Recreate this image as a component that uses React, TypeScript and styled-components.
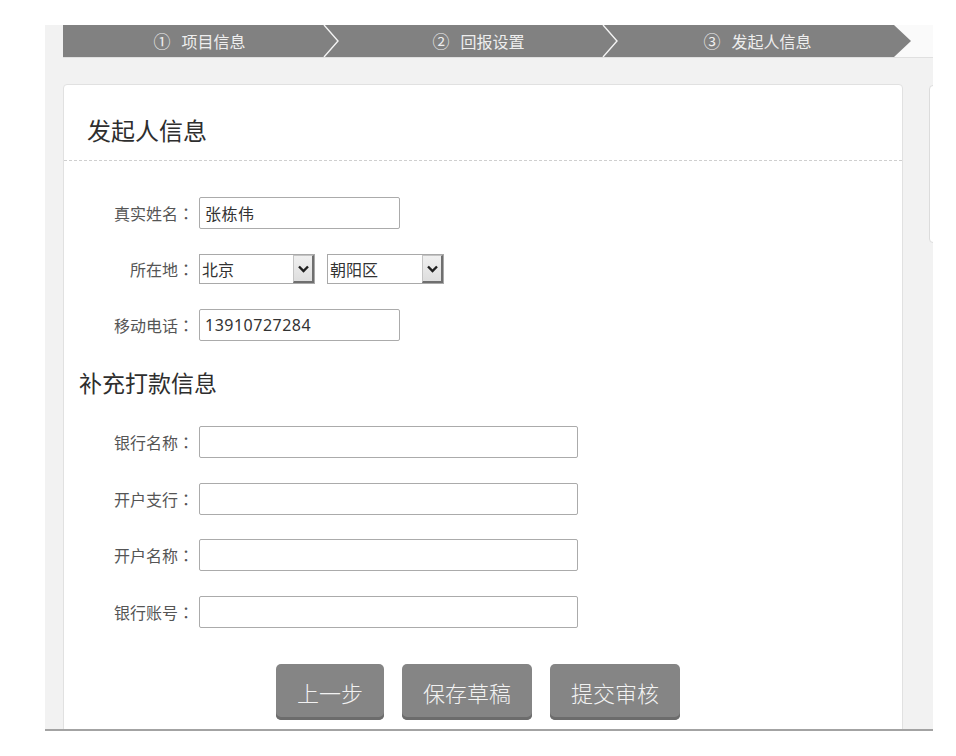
import React from "react";
import styled, { createGlobalStyle } from "styled-components";

const GlobalStyle = createGlobalStyle`
  html, body {
    margin: 0;
    padding: 0;
    background: #ffffff;
    overflow: hidden;
  }
  body {
    font-family: "Noto Sans CJK SC", "Noto Sans", sans-serif;
    color: #333;
  }
  * { box-sizing: border-box; }
`;

const Page = styled.div`
  padding: 25px 0 0 45px;
  width: 956px;
  height: 756px;
`;

const Frame = styled.div`
  width: 888px;
  height: 706px;
  background: #f2f2f2;
  border-bottom: 2px solid #a3a3a3;
  overflow: hidden;
  display: flex;
  flex-direction: column;
`;

const StepBar = styled.div`
  display: flex;
  height: 33px;
  margin-left: 18px;
  padding-right: 22px;
  background: #fafafa;
  border-bottom: 1px solid #e0e0e0;
`;

const Step = styled.div<{ $last?: boolean }>`
  position: relative;
  flex: 1;
  display: flex;
  align-items: center;
  justify-content: center;
  gap: 11px;
  background: #818181;
  color: #eeeeee;
  font-size: 16px;
  line-height: 32px;
  padding-right: ${(p) => (p.$last ? "17px" : "6px")};
  clip-path: ${(p) =>
    p.$last
      ? "polygon(0 0, calc(100% - 17px) 0, 100% 50%, calc(100% - 17px) 100%, 0 100%)"
      : "none"};
`;

const StepNum = styled.span`
  font-size: 17px;
`;

const ChevronMark = styled.svg`
  position: absolute;
  right: 2px;
  top: 0;
  width: 17px;
  height: 32px;
`;

const Content = styled.div`
  display: flex;
  gap: 26px;
  padding-left: 18px;
  margin-top: 26px;
  flex: none;
`;

const Card = styled.div`
  flex: none;
  width: 840px;
  min-height: 700px;
  background: #ffffff;
  border: 1px solid #e1e1e1;
  border-radius: 4px;
`;

const CardHeader = styled.div`
  padding: 31px 24px 16px 23px;
  border-bottom: 1px dashed #cfcfcf;
`;

const CardTitle = styled.h2`
  margin: 0;
  font-size: 24px;
  line-height: 28px;
  font-weight: 400;
  color: #2e2e2e;
`;

const Form = styled.div`
  padding-top: 36px;
  display: flex;
  flex-direction: column;
`;

const Fields = styled.div<{ $gap: number; $top?: number }>`
  display: flex;
  flex-direction: column;
  gap: ${(p) => p.$gap}px;
  margin-top: ${(p) => p.$top ?? 0}px;
`;

const Row = styled.div`
  display: flex;
  align-items: center;
  height: 32px;
`;

const Label = styled.label`
  width: 130px;
  margin-right: 5px;
  text-align: right;
  font-size: 16px;
  color: #555;
  white-space: nowrap;
`;

const Colon = styled.span`
  font-family: "Noto Sans CJK JP", "Noto Sans CJK SC", sans-serif;
`;

const TextInput = styled.input<{ $width: number }>`
  width: ${(p) => p.$width}px;
  height: 32px;
  padding: 0 5px;
  border: 1px solid #ababab;
  border-radius: 2px;
  background: #fff;
  font-family: "Noto Sans", "Noto Sans CJK SC", sans-serif;
  font-size: 16px;
  letter-spacing: 0.5px;
  color: #333;
  outline: none;
`;

const SelectGroup = styled.div`
  display: flex;
  gap: 12px;
`;

const SelectBox = styled.div<{ $width: number }>`
  width: ${(p) => p.$width}px;
  height: 30px;
  display: flex;
  align-items: stretch;
  border: 1px solid #a9a9a9;
  background: #fff;
`;

const SelectText = styled.span`
  flex: 1;
  padding-left: 2px;
  font-size: 16px;
  line-height: 28px;
  color: #333;
`;

const SelectArrow = styled.span`
  width: 21px;
  display: flex;
  align-items: center;
  justify-content: center;
  background: linear-gradient(#f0f0f0, #dedede);
  border: 1px solid #8a8a8a;
  border-top-color: #c4c4c4;
  border-left-color: #c4c4c4;
  border-right-width: 2px;
  border-bottom-width: 2px;
  border-right-color: #6f6f6f;
  border-bottom-color: #6f6f6f;
`;

const SectionTitle = styled.h3`
  margin: 26px 0 0 15px;
  font-size: 23px;
  line-height: 30px;
  font-weight: 400;
  color: #2e2e2e;
`;

const ButtonRow = styled.div`
  display: flex;
  justify-content: center;
  gap: 18px;
  padding-right: 10px;
  margin-top: 36px;
`;

const ActionButton = styled.button`
  height: 56px;
  padding: 0 21px;
  border: none;
  border-radius: 5px;
  background: #858585;
  box-shadow: inset 0 -3px 0 #6c6c6c;
  color: #f2f2f2;
  font-family: "Noto Sans CJK SC", sans-serif;
  font-size: 22px;
  font-weight: 300;
  line-height: 56px;
  cursor: pointer;
`;

const SidePanel = styled.div`
  flex: none;
  width: 200px;
  height: 158px;
  margin-top: 1px;
  background: #fff;
  border: 1px solid #dcdcdc;
  border-radius: 4px;
`;

const Chevron = () => (
  <ChevronMark viewBox="0 0 17 32">
    <polyline points="1,0 15,16 1,32" fill="none" stroke="#f4f4f4" strokeWidth="1.4" />
  </ChevronMark>
);

const DownArrow = () => (
  <svg width="11" height="8" viewBox="0 0 11 8">
    <polyline points="1,1.5 5.5,6 10,1.5" fill="none" stroke="#1f1f1f" strokeWidth="2.4" />
  </svg>
);

const Select = ({ width, value }: { width: number; value: string }) => (
  <SelectBox $width={width}>
    <SelectText>{value}</SelectText>
    <SelectArrow>
      <DownArrow />
    </SelectArrow>
  </SelectBox>
);

const FieldLabel = ({ text }: { text: string }) => (
  <Label>
    {text}
    <Colon>：</Colon>
  </Label>
);

const steps = [
  { n: "①", t: "项目信息" },
  { n: "②", t: "回报设置" },
  { n: "③", t: "发起人信息" },
];

const bankFields = ["银行名称", "开户支行", "开户名称", "银行账号"];

export default function App() {
  return (
    <>
      <GlobalStyle />
      <Page>
        <Frame>
          <StepBar>
            {steps.map((s, i) => (
              <Step key={s.n} $last={i === steps.length - 1}>
                <StepNum>{s.n}</StepNum>
                <span>{s.t}</span>
                {i < steps.length - 1 && <Chevron />}
              </Step>
            ))}
          </StepBar>
          <Content>
            <Card>
              <CardHeader>
                <CardTitle>发起人信息</CardTitle>
              </CardHeader>
              <Form>
                <Fields $gap={24}>
                  <Row>
                    <FieldLabel text="真实姓名" />
                    <TextInput $width={201} defaultValue="张栋伟" />
                  </Row>
                  <Row>
                    <FieldLabel text="所在地" />
                    <SelectGroup>
                      <Select width={116} value="北京" />
                      <Select width={117} value="朝阳区" />
                    </SelectGroup>
                  </Row>
                  <Row>
                    <FieldLabel text="移动电话" />
                    <TextInput $width={201} defaultValue="13910727284" />
                  </Row>
                </Fields>
                <SectionTitle>补充打款信息</SectionTitle>
                <Fields $gap={24.5} $top={29}>
                  {bankFields.map((f) => (
                    <Row key={f}>
                      <FieldLabel text={f} />
                      <TextInput $width={379} />
                    </Row>
                  ))}
                </Fields>
                <ButtonRow>
                  <ActionButton>上一步</ActionButton>
                  <ActionButton>保存草稿</ActionButton>
                  <ActionButton>提交审核</ActionButton>
                </ButtonRow>
              </Form>
            </Card>
            <SidePanel />
          </Content>
        </Frame>
      </Page>
    </>
  );
}
